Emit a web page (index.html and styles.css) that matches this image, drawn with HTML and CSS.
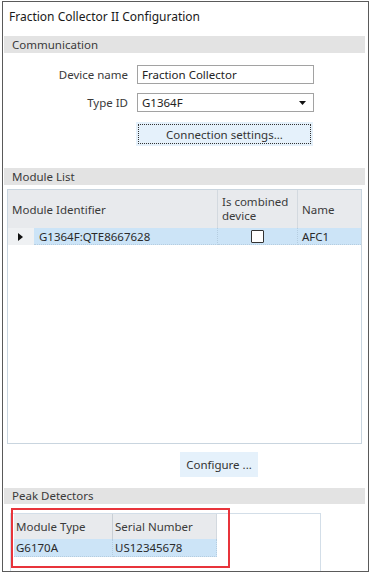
FILE: index.html
```html
<!DOCTYPE html>
<html lang="en">
<head>
    <meta charset="UTF-8">
    <meta name="viewport" content="width=device-width, initial-scale=1.0">
    <title>Fraction Collector II Configuration</title>
    <link rel="stylesheet" href="styles.css">
</head>
<body>
    <div class="window">
        <div class="title">Fraction Collector II Configuration</div>

        <div class="section-head">Communication</div>
        <div class="comm-form">
            <label for="device-name">Device name</label>
            <div class="field" id="device-name">Fraction Collector</div>

            <label for="type-id">Type ID</label>
            <div class="field select" id="type-id">
                <span>G1364F</span>
                <svg class="arrow" width="7" height="4" viewBox="0 0 7 4"><path d="M0 0 H7 L3.5 4 Z" fill="#111"/></svg>
            </div>

            <span></span>
            <button class="btn btn-focus">Connection settings...</button>
        </div>

        <div class="section-head module-head">Module List</div>
        <div class="module-grid">
            <div class="mg-head">
                <div class="mg-hcell">Module Identifier</div>
                <div class="mg-hcell two-line"><span>Is combined</span><span>device</span></div>
                <div class="mg-hcell">Name</div>
            </div>
            <div class="mg-row">
                <div class="mg-rowhead">
                    <svg width="5" height="8" viewBox="0 0 5 8"><path d="M0 0 L5 4 L0 8 Z" fill="#111"/></svg>
                </div>
                <div class="mg-cell">G1364F:QTE8667628</div>
                <div class="mg-cell center"><span class="checkbox"></span></div>
                <div class="mg-cell">AFC1</div>
            </div>
        </div>

        <div class="configure-row">
            <button class="btn">Configure ...</button>
        </div>

        <div class="section-head peak-head">Peak Detectors</div>
        <div class="peak-grid">
            <div class="pg-head">
                <div class="pg-hcell">Module Type</div>
                <div class="pg-hcell">Serial Number</div>
            </div>
            <div class="pg-row">
                <div class="pg-cell">G6170A</div>
                <div class="pg-cell">US12345678</div>
            </div>
        </div>

        <div class="highlight"></div>
    </div>
</body>
</html>
```

FILE: styles.css
```css
* {
    margin: 0;
    padding: 0;
    box-sizing: border-box;
}

body {
    background-color: #fff;
    font-family: 'Noto Sans', 'DejaVu Sans', sans-serif;
    font-size: 11.5px;
    color: #333;
}

.window {
    position: relative;
    margin: 1px 0 0 2px;
    width: 367px;
    height: 571px;
    border: 1px solid #5a5a5a;
    overflow: hidden;
}

.title {
    height: 34px;
    line-height: 30px;
    padding-left: 6px;
    font-size: 12px;
    color: #1a1a1a;
}

.section-head {
    height: 17px;
    line-height: 17px;
    margin: 0 3px 0 1px;
    padding-left: 8px;
    background-color: #e3e3e3;
    color: #3a3a3a;
}

/* Communication */
.comm-form {
    display: grid;
    grid-template-columns: 125px 177px;
    column-gap: 9px;
    row-gap: 9px;
    margin-top: 12px;
    align-items: center;
}

.comm-form label {
    text-align: right;
    color: #3a3a3a;
}

.field {
    height: 19px;
    line-height: 17px;
    border: 1px solid #a2a2a2;
    padding-left: 4px;
    color: #222;
    background-color: #fff;
}

.select {
    display: flex;
    justify-content: space-between;
    align-items: center;
    padding-right: 7px;
}

.btn {
    font-family: inherit;
    font-size: 11.5px;
    color: #333;
    background-color: #e5f1fb;
    border: 1px solid #e5f1fb;
    cursor: pointer;
}

.btn-focus {
    height: 24px;
    width: 177px;
    margin-top: 1px;
    margin-left: -1px;
    outline: 1px dotted #333;
    outline-offset: -3px;
}

/* Module List */
.module-head {
    margin-top: 22px;
}

.module-grid {
    margin: 4px 6px 0 4px;
    height: 255px;
    border: 1px solid #c9d5df;
    background-color: #fff;
}

.mg-head {
    display: grid;
    grid-template-columns: 210px 80px 1fr;
    height: 38px;
    background-color: #e8eaed;
}

.mg-hcell {
    display: flex;
    align-items: center;
    padding-left: 4px;
    border-right: 1px solid #d3d9df;
    color: #3a3a3a;
}

.mg-hcell.two-line {
    flex-direction: column;
    align-items: flex-start;
    justify-content: center;
    line-height: 14px;
}

.mg-hcell:last-child {
    border-right: none;
}

.mg-row {
    display: grid;
    grid-template-columns: 26px 184px 80px 1fr;
    height: 17px;
}

.mg-rowhead {
    display: flex;
    align-items: center;
    padding-left: 10px;
    background-color: #eff1f3;
}

.mg-cell {
    display: flex;
    align-items: center;
    padding-left: 5px;
    background-color: #cce4f7;
    border-right: 1px dotted #b5cde0;
    border-bottom: 1px dotted #b5cde0;
    color: #2a2a2a;
}

.mg-cell:first-of-type {
    padding-left: 6px;
}

.mg-cell:last-child {
    padding-left: 4px;
    border-right: none;
}

.mg-cell.center {
    justify-content: center;
    padding-left: 0;
}

.checkbox {
    display: block;
    width: 13px;
    height: 13px;
    border: 1px solid #333;
    border-radius: 1px;
    background-color: #fff;
}

.configure-row {
    margin-top: 8px;
    padding-left: 177px;
}

.configure-row .btn {
    width: 78px;
    height: 25px;
}

/* Peak Detectors */
.peak-head {
    margin-top: 11px;
    height: 16px;
    line-height: 16px;
}

.peak-grid {
    margin: 9px 0 0 7px;
    width: 311px;
    height: 70px;
    border: 1px solid #d3dee8;
    padding-left: 3px;
}

.pg-head,
.pg-row {
    display: grid;
    grid-template-columns: 99px 104px;
    width: 203px;
}

.pg-head {
    height: 25px;
    background-color: #e8eaed;
}

.pg-hcell {
    display: flex;
    align-items: center;
    padding-left: 2px;
    border-right: 1px solid #d3d9df;
    color: #3a3a3a;
}

.pg-hcell:first-child {
    border-right: 1px solid #c9cfd5;
}

.pg-row {
    height: 18px;
    background-color: #cce4f7;
}

.pg-cell {
    display: flex;
    align-items: center;
    padding-left: 2px;
    border-right: 1px dotted #b5cde0;
    border-bottom: 1px dotted #b5cde0;
    color: #2a2a2a;
}

.highlight {
    position: absolute;
    left: 8px;
    top: 506px;
    width: 219px;
    height: 60px;
    border: 2px solid #e8343b;
}
```
